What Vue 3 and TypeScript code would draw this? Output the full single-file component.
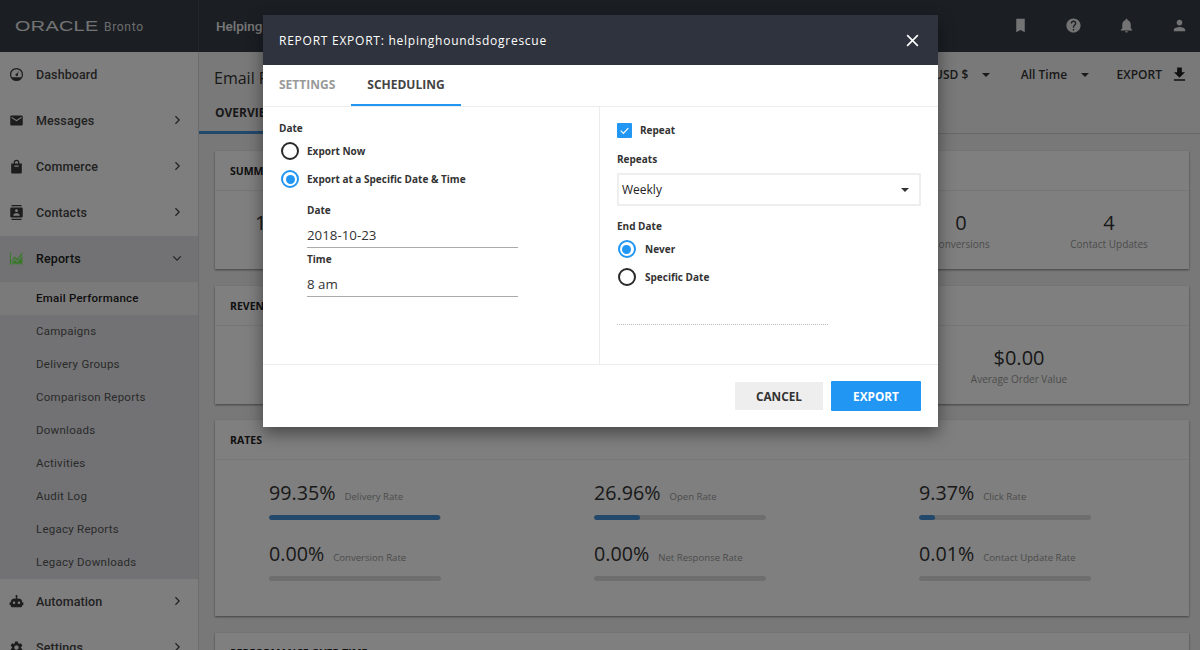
<script setup lang="ts">
interface NavItem { label: string; icon: string; arrow?: boolean; color?: string }
const mail = 'M20 4H4c-1.1 0-2 .9-2 2v12c0 1.1.9 2 2 2h16c1.1 0 2-.9 2-2V6c0-1.1-.9-2-2-2zm0 4l-8 5-8-5V6l8 5 8-5v2z'
const bag = 'M12 1a4.500 4.500 0 0 0-4.500 4.500V7H3.500v14.500a1.500 1.500 0 0 0 1.500 1.500h14a1.500 1.500 0 0 0 1.500-1.500V7h-4V5.500A4.500 4.500 0 0 0 12 1zm0 2a2.500 2.500 0 0 1 2.500 2.500V7h-5V5.500A2.500 2.500 0 0 1 12 3z M8.500 10.500h7v2h-7z'
const contacts = 'M20 0H4v2h16V0zM4 24h16v-2H4v2zM20 4H4c-1.1 0-2 .9-2 2v12c0 1.1.9 2 2 2h16c1.1 0 2-.9 2-2V6c0-1.1-.9-2-2-2zm-8 2.750c1.240 0 2.250 1.010 2.250 2.250s-1.010 2.250-2.250 2.250S9.750 10.240 9.750 9 10.760 6.750 12 6.750zM17 17H7v-1.500c0-1.670 3.330-2.500 5-2.500s5 .83 5 2.500V17z'
const gauge = 'M12 1.500a10.500 10.500 0 1 0 0 21 10.500 10.500 0 0 0 0-21zm0 2a8.500 8.500 0 0 1 8.500 8.500c0 1.500-.4 3-1.100 4.200H4.600A8.500 8.500 0 0 1 3.500 12 8.500 8.500 0 0 1 12 3.500zm3.800 2.800l-3.300 4.300a2 2 0 1 0 1.700 1.100z'
const chart = 'M1.500 2h1.500v15l6-8.500 4 4L21.500 2v3l-8.500 10.500-4-4-6 8.500v1.500h19V22h-20.500z M4.500 20.500l4.700-6.700 4 4 8.300-10.300v13z'
const robot = 'M12 1.500a1.700 1.700 0 0 0-1 3.100V7H9a6 6 0 0 0-6 6H2a1 1 0 0 0-1 1v3a1 1 0 0 0 1 1h1v1a2 2 0 0 0 2 2h14a2 2 0 0 0 2-2v-1h1a1 1 0 0 0 1-1v-3a1 1 0 0 0-1-1h-1a6 6 0 0 0-6-6h-2V4.600a1.700 1.700 0 0 0-1-3.100zM8 12a2 2 0 1 1 0 4 2 2 0 0 1 0-4zm8 0a2 2 0 1 1 0 4 2 2 0 0 1 0-4z'
const gear = 'M19.140 12.940c.04-.3.06-.61.06-.94s-.02-.64-.07-.94l2.030-1.580a.49.49 0 0 0 .12-.61l-1.920-3.320a.49.49 0 0 0-.59-.22l-2.390.96c-.5-.38-1.030-.7-1.620-.94l-.36-2.540a.48.48 0 0 0-.48-.41h-3.840a.47.47 0 0 0-.47.41l-.36 2.540c-.59.24-1.130.57-1.620.94l-2.390-.96a.49.49 0 0 0-.59.22L2.740 8.870a.47.47 0 0 0 .12.61l2.030 1.580c-.05.3-.09.63-.09.94s.02.64.07.94l-2.030 1.580a.49.49 0 0 0-.12.61l1.920 3.320c.12.22.37.29.59.22l2.390-.96c.5.38 1.030.7 1.620.94l.36 2.540c.05.24.24.41.48.41h3.840c.24 0 .44-.17.47-.41l.36-2.540c.59-.24 1.130-.56 1.620-.94l2.390.96c.22.08.47 0 .59-.22l1.920-3.320a.47.47 0 0 0-.12-.61l-2.010-1.580zM12 15.600A3.610 3.610 0 0 1 8.400 12c0-1.980 1.620-3.600 3.600-3.600s3.600 1.620 3.600 3.600-1.620 3.600-3.600 3.600z'

const navTop: NavItem[] = [
  { label: 'Dashboard', icon: gauge },
  { label: 'Messages', icon: mail, arrow: true },
  { label: 'Commerce', icon: bag, arrow: true },
  { label: 'Contacts', icon: contacts, arrow: true },
]
const subItems = ['Campaigns', 'Delivery Groups', 'Comparison Reports', 'Downloads', 'Activities', 'Audit Log', 'Legacy Reports', 'Legacy Downloads']
const navBottom: NavItem[] = [
  { label: 'Automation', icon: robot, arrow: true },
  { label: 'Settings', icon: gear, arrow: true },
]
const headerIcons = [
  'M6 2.500h12v19l-6-3-6 3z',
  'M12 2C6.480 2 2 6.480 2 12s4.480 10 10 10 10-4.480 10-10S17.520 2 12 2zm1 17h-2v-2h2v2zm2.070-7.750l-.9.92C13.450 12.900 13 13.500 13 15h-2v-.5c0-1.100.45-2.100 1.170-2.830l1.240-1.260c.37-.36.59-.86.59-1.410 0-1.100-.9-2-2-2s-2 .9-2 2H8c0-2.210 1.790-4 4-4s4 1.790 4 4c0 .88-.36 1.680-.93 2.250z',
  'M12 22c1.100 0 2-.9 2-2h-4c0 1.100.89 2 2 2zm6-6v-5c0-3.070-1.640-5.640-4.500-6.320V4c0-.83-.67-1.500-1.500-1.500s-1.500.67-1.500 1.500v.68C7.630 5.360 6 7.920 6 11v5l-2 2v1h16v-1l-2-2z',
  'M12 12c2.210 0 4-1.790 4-4s-1.790-4-4-4-4 1.790-4 4 1.790 4 4 4zm0 2c-2.670 0-8 1.340-8 4v2h16v-2c0-2.660-5.330-4-8-4z',
]
const rates = [
  { value: '99.35%', label: 'Delivery Rate', pct: 99.35 },
  { value: '26.96%', label: 'Open Rate', pct: 26.96 },
  { value: '9.37%', label: 'Click Rate', pct: 9.37 },
  { value: '0.00%', label: 'Conversion Rate', pct: 0 },
  { value: '0.00%', label: 'Net Response Rate', pct: 0 },
  { value: '0.01%', label: 'Contact Update Rate', pct: 0 },
]
</script>

<template>
  <div class="page">
    <header class="topbar">
      <div class="brand">
        <span class="oracle">ORACLE</span>
        <span class="bronto">Bronto</span>
      </div>
      <div class="account">Helping Hounds Dog Rescue</div>
      <div class="top-icons">
        <svg v-for="d in headerIcons" :key="d" viewBox="0 0 24 24" class="top-icon"><path :d="d" /></svg>
      </div>
    </header>

    <div class="shell">
      <nav class="sidebar">
        <div v-for="n in navTop" :key="n.label" class="nav-row">
          <svg viewBox="0 0 24 24" class="nav-icon"><path :d="n.icon" fill-rule="evenodd" /></svg>
          <span class="nav-label">{{ n.label }}</span>
          <svg v-if="n.arrow" viewBox="0 0 8 12" class="chev"><path d="M1.500 1.500L6 6l-4.500 4.500" /></svg>
        </div>
        <div class="nav-group">
          <div class="nav-row">
            <svg viewBox="0 0 24 24" class="nav-icon green"><path :d="chart" /></svg>
            <span class="nav-label strong">Reports</span>
            <svg viewBox="0 0 12 8" class="chev-down"><path d="M1.500 1.500L6 6l4.500-4.500" /></svg>
          </div>
          <div class="sub-row current">Email Performance</div>
          <div v-for="s in subItems" :key="s" class="sub-row">{{ s }}</div>
        </div>
        <div v-for="n in navBottom" :key="n.label" class="nav-row">
          <svg viewBox="0 0 24 24" class="nav-icon"><path :d="n.icon" fill-rule="evenodd" /></svg>
          <span class="nav-label">{{ n.label }}</span>
          <svg v-if="n.arrow" viewBox="0 0 8 12" class="chev"><path d="M1.500 1.500L6 6l-4.500 4.500" /></svg>
        </div>
      </nav>

      <main class="main">
        <div class="subhead">
          <div class="subhead-top">
            <h1 class="title">Email Performance</h1>
            <div class="controls">
              <span class="ctl">USD $<i class="caret"></i></span>
              <span class="ctl">All Time<i class="caret"></i></span>
              <span class="ctl export">EXPORT
                <svg viewBox="0 0 24 24" class="dl"><path d="M19 9h-4V3H9v6H5l7 7 7-7zM5 18v2h14v-2H5z" /></svg>
              </span>
            </div>
          </div>
          <div class="page-tabs"><span class="page-tab">OVERVIEW</span></div>
        </div>

        <div class="cards">
          <section class="card h118">
            <div class="card-head">SUMMARY</div>
            <div class="summary">
              <div class="stat"><div class="num">1084215</div><div class="cap">Sent</div></div>
              <div class="stat push"><div class="num">0</div><div class="cap">Conversions</div></div>
              <div class="stat"><div class="num">4</div><div class="cap">Contact Updates</div></div>
            </div>
          </section>

          <section class="card h118">
            <div class="card-head">REVENUE</div>
            <div class="revenue">
              <div class="stat wide"><div class="num">$0.00</div><div class="cap">Average Order Value</div></div>
            </div>
          </section>

          <section class="card rates-card">
            <div class="card-head">RATES</div>
            <div class="rates">
              <div v-for="r in rates" :key="r.label" class="rate">
                <div class="rate-line"><span class="rate-val">{{ r.value }}</span><span class="rate-label">{{ r.label }}</span></div>
                <div class="track"><div class="fill" :style="{ width: r.pct + '%' }"></div></div>
              </div>
            </div>
          </section>

          <section class="card">
            <div class="card-head with-minus">PERFORMANCE OVER TIME<i class="minus"></i></div>
          </section>
        </div>
      </main>
    </div>

    <div class="overlay">
      <div class="modal">
        <div class="modal-head">
          <span class="modal-title">REPORT EXPORT: helpinghoundsdogrescue</span>
          <svg viewBox="0 0 14 14" class="close"><path d="M2 2l10 10M12 2L2 12" /></svg>
        </div>
        <div class="modal-tabs">
          <span class="m-tab">SETTINGS</span>
          <span class="m-tab active">SCHEDULING</span>
        </div>
        <div class="modal-body">
          <div class="col left">
            <div class="lbl">Date</div>
            <label class="radio first"><i class="dot"></i>Export Now</label>
            <label class="radio"><i class="dot on"></i>Export at a Specific Date &amp; Time</label>
            <div class="fields">
              <div class="lbl">Date</div>
              <div class="input">2018-10-23</div>
              <div class="lbl time">Time</div>
              <div class="input">8 am</div>
            </div>
          </div>
          <div class="col right">
            <label class="check">
              <i class="box"><svg viewBox="0 0 16 16"><path d="M4 8.200l2.800 2.800L12 5.500" /></svg></i>Repeat
            </label>
            <div class="lbl repeats">Repeats</div>
            <div class="select">Weekly<i class="caret"></i></div>
            <div class="lbl end">End Date</div>
            <label class="radio r-first"><i class="dot on"></i>Never</label>
            <label class="radio r-second"><i class="dot"></i>Specific Date</label>
            <div class="dotted"></div>
          </div>
        </div>
        <div class="modal-foot">
          <button class="btn cancel" type="button">CANCEL</button>
          <button class="btn primary" type="button">EXPORT</button>
        </div>
      </div>
    </div>
  </div>
</template>

<style>
html, body { margin: 0; overflow: hidden; }
</style>

<style scoped>
* { box-sizing: border-box; }
.page { position: relative; width: 1200px; height: 650px; overflow: hidden; background: #f0f0f0; font-family: "Open Sans", sans-serif; color: #333; }

.topbar { height: 52px; background: #363e48; display: flex; align-items: center; color: #fff; }
.brand { width: 199px; height: 52px; flex: none; display: flex; align-items: center; padding-left: 15px; border-right: 1px solid #454c56; }
.oracle { font-family: "Liberation Sans", sans-serif; font-size: 14.500px; display: inline-block; transform: scaleX(1.36); transform-origin: left center; letter-spacing: .3px; width: 89px; color: #e6e6e6; }
.bronto { font-family: Roboto, sans-serif; font-size: 12px; letter-spacing: .7px; color: #d8d8d8; margin-top: 2px; }
.account { font-family: Roboto, sans-serif; font-size: 13.500px; font-weight: 500; padding-left: 17px; margin-top: -1px; color: #eee; }
.top-icons { margin-left: auto; display: flex; gap: 36px; padding-right: 12px; margin-top: -1px; }
.top-icon { width: 17px; height: 17px; fill: #e6e6e6; }

.shell { display: flex; height: 598px; }
.sidebar { width: 199px; flex: none; background: #fdfdfd; border-right: 1px solid #d8d8d8; font-family: Roboto, sans-serif; }
.nav-row { height: 46px; display: flex; align-items: center; padding: 0 0 1px 9px; position: relative; }
.nav-icon { width: 15px; height: 15px; fill: #3a3a3a; flex: none; margin-left: -.5px; }
.nav-icon.green { fill: #70f050; }
.nav-label { margin-left: 12.500px; font-size: 12.500px; font-weight: 500; letter-spacing: .1px; color: #444; }
.nav-label.strong { color: #222; }
.chev { width: 7px; height: 10px; position: absolute; left: 174px; top: 17px; fill: none; stroke: #444; stroke-width: 1.500; }
.chev-down { width: 10px; height: 7px; position: absolute; left: 172px; top: 19px; fill: none; stroke: #444; stroke-width: 1.500; }
.nav-group { background: #e4e5e9; }
.sub-row { height: 33px; display: flex; align-items: center; padding: 0 0 2px 36px; font-size: 11.500px; letter-spacing: .25px; color: #555; }
.sub-row.current { background: #f5f5f5; color: #222; font-weight: 500; }

.main { flex: 1; min-width: 0; }
.subhead { height: 82px; background: #f3f3f3; border-bottom: 1px solid #d0d0d0; position: relative; }
.subhead-top { height: 45px; display: flex; align-items: center; padding: 0 11px 0 15px; }
.title { font-size: 16px; font-weight: 400; margin: 7px 0 0; color: #333; }
.controls { margin-left: auto; display: flex; align-items: center; font-size: 12px; font-weight: 600; color: #333; }
.ctl { display: flex; align-items: center; margin-left: 31px; }
.ctl .caret { margin-left: 13.500px; }
.ctl.export { margin-left: 28px; gap: 8px; }
.caret { display: inline-block; width: 0; height: 0; border-left: 4px solid transparent; border-right: 4px solid transparent; border-top: 4.500px solid #333; }
.dl { width: 19px; height: 19px; fill: #222; }
.page-tab { display: inline-block; height: 37px; padding: 8px 16px 0; font-size: 12px; font-weight: 700; color: #333; border-bottom: 3px solid #4490d8; line-height: 15px; }

.cards { padding: 17px 11px 0 16px; display: flex; flex-direction: column; gap: 17px; }
.card { background: #fff; box-shadow: 0 1px 2px rgba(0,0,0,.45); }
.h118 { height: 118px; flex: none; }
.rates-card { height: 196px; flex: none; margin-top: -1px; }
.card-head { height: 40px; padding: 0 15px; display: flex; align-items: center; font-size: 10.500px; font-weight: 700; color: #222; border-bottom: 1px solid #ececec; }
.with-minus { justify-content: space-between; border-bottom: 0; }
.minus { width: 15px; height: 2px; background: #222; margin-right: 4px; }
.summary { display: flex; padding: 2px 6px 0; height: 77px; align-items: center; }
.summary .stat { width: 148px; }
.summary .push { margin-left: auto; }
.stat { text-align: center; }
.num { font-size: 20px; line-height: 26px; color: #333; }
.cap { font-size: 10px; color: #999; line-height: 16px; }
.revenue { display: flex; justify-content: flex-end; height: 77px; padding-top: 2px; align-items: center; }
.stat.wide { width: 340px; }
.rates { display: grid; grid-template-columns: repeat(3, 325px); padding: 19px 0 0 54px; grid-auto-rows: 61px; }
.rate-line { display: flex; align-items: baseline; gap: 9px; height: 28px; line-height: 28px; }
.rate-val { font-size: 19.700px; color: #333; }
.rate-label { font-size: 9.600px; color: #999; }
.track { width: 172px; height: 5px; border-radius: 3px; background: #dcdcdc; margin-top: 8px; overflow: hidden; }
.fill { height: 100%; background: #4490d8; border-radius: 3px; }

.overlay { position: absolute; inset: 0; background: rgba(0,0,0,.5); display: flex; justify-content: center; align-items: flex-start; padding: 15px 0 0 1px; }
.modal { width: 675px; height: 412px; background: #fff; box-shadow: 0 6px 16px rgba(0,0,0,.45); display: flex; flex-direction: column; }
.modal-head { height: 50px; flex: none; background: #2f333d; display: flex; align-items: center; justify-content: space-between; padding: 0 18px 0 16px; color: #fff; }
.modal-title { font-size: 12px; font-weight: 500; letter-spacing: .75px; }
.close { width: 15px; height: 15px; fill: none; stroke: #fff; stroke-width: 1.500; }
.modal-tabs { height: 42px; flex: none; border-bottom: 1px solid #ececec; display: flex; }
.m-tab { padding: 13px 16px 0; font-size: 12px; font-weight: 700; color: #999; line-height: 14px; height: 41px; }
.m-tab.active { color: #444; border-bottom: 2px solid #2196f3; }
.modal-body { flex: 1; display: flex; }
.col { width: 50%; }
.left { width: 337px; border-right: 1px solid #ececec; padding: 14px 0 0 16px; }
.right { padding: 15px 0 0 17px; width: 321px; }
.lbl { font-size: 10px; font-weight: 700; color: #333; line-height: 14px; }
.radio { display: flex; align-items: center; height: 18px; font-size: 10px; font-weight: 700; color: #333; margin-top: 10px; }
.radio.first { margin-top: 7px; }
.dot { width: 18px; height: 18px; border: 2px solid #2a2a2a; border-radius: 50%; margin: 0 8px 0 2px; flex: none; position: relative; display: block; }
.dot.on { border-color: #2196f3; }
.dot.on::after { content: ""; position: absolute; inset: 2.500px; background: #2196f3; border-radius: 50%; }
.fields { padding: 15px 0 0 28px; width: 239px; }
.input { font-size: 13.300px; color: #333; line-height: 20px; height: 25px; margin-top: 6px; padding-top: 2px; border-bottom: 1px solid #aaa; }
.lbl.time { margin-top: 4px; }
.check { display: flex; align-items: center; font-size: 10px; font-weight: 700; color: #333; height: 16px; }
.box { width: 15px; height: 15px; background: #2196f3; border-radius: 1px; margin-right: 8px; display: block; }
.box svg { width: 15px; height: 15px; fill: none; stroke: #fff; stroke-width: 1.300; display: block; }
.repeats { margin-top: 14px; }
.select { width: 304px; height: 33px; margin-top: 7px; border: 2px solid #eee; padding: 0 10px 0 3px; display: flex; align-items: center; justify-content: space-between; font-size: 12px; color: #222; }
.end { margin-top: 13px; }
.r-first { margin-top: 7px; }
.r-second { margin-top: 10px; }
.right .dot { margin-left: .5px; margin-right: 9.500px; }
.dotted { width: 211px; border-top: 1px dotted #bbb; margin-top: 38px; }
.modal-foot { height: 63px; flex: none; border-top: 1px solid #ececec; display: flex; justify-content: flex-end; align-items: center; gap: 8px; padding-right: 17px; }
.btn { border: 0; font-family: "Open Sans", sans-serif; font-size: 11.800px; font-weight: 700; padding: 0; cursor: pointer; }
.cancel { width: 88px; height: 28px; background: #eee; color: #333; }
.primary { width: 90px; height: 30px; background: #2196f3; color: #fff; border-radius: 1px; }
</style>
